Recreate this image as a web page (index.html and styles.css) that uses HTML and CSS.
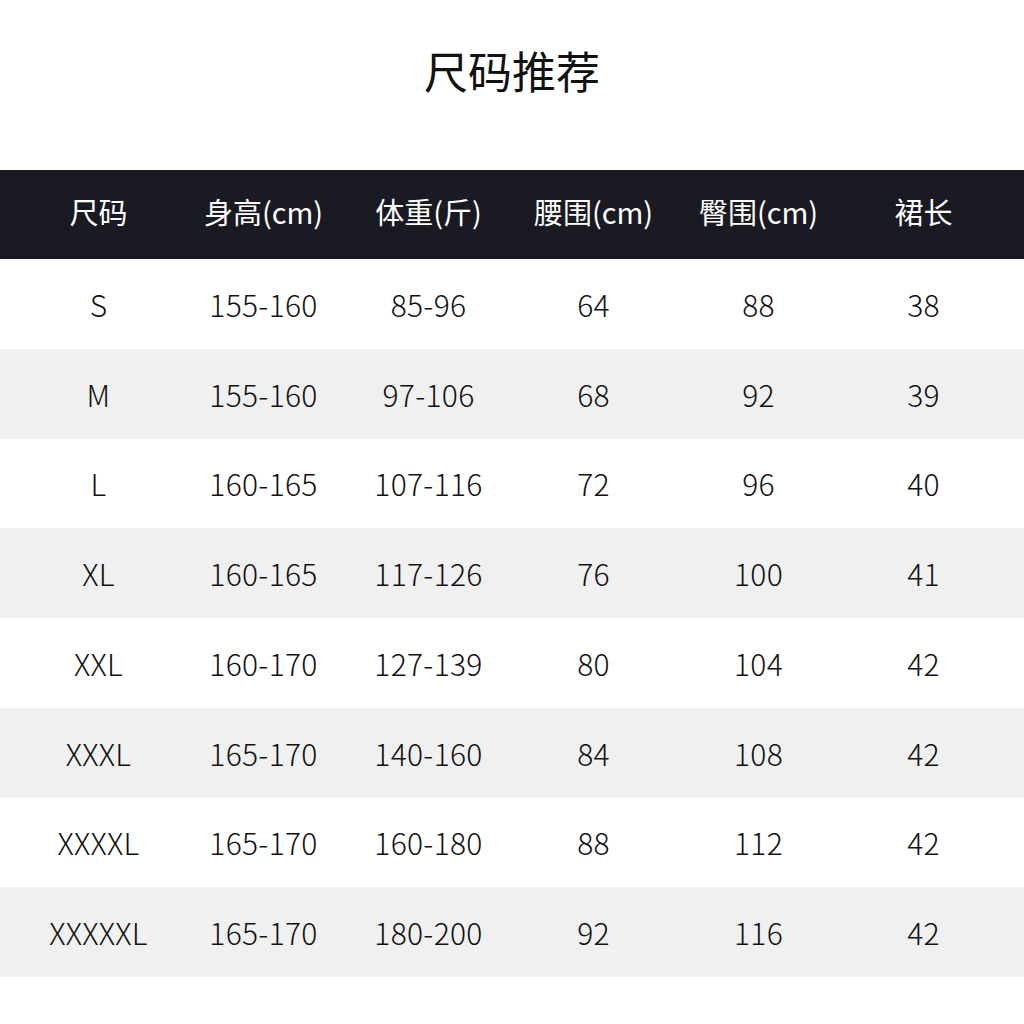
FILE: index.html
```html
<!DOCTYPE html>
<html lang="zh-CN">
<head>
<meta charset="utf-8">
<title>尺码推荐</title>
<link rel="stylesheet" href="styles.css">
</head>
<body>
<div class="page">
  <h1 class="title">尺码推荐</h1>
  <div class="table">
    <div class="row head">
      <div class="cell">尺码</div><div class="cell">身高(cm)</div><div class="cell">体重(斤)</div><div class="cell">腰围(cm)</div><div class="cell">臀围(cm)</div><div class="cell">裙长</div>
    </div>
    <div class="row">
      <div class="cell">S</div><div class="cell">155-160</div><div class="cell">85-96</div><div class="cell">64</div><div class="cell">88</div><div class="cell">38</div>
    </div>
    <div class="row alt">
      <div class="cell">M</div><div class="cell">155-160</div><div class="cell">97-106</div><div class="cell">68</div><div class="cell">92</div><div class="cell">39</div>
    </div>
    <div class="row">
      <div class="cell">L</div><div class="cell">160-165</div><div class="cell">107-116</div><div class="cell">72</div><div class="cell">96</div><div class="cell">40</div>
    </div>
    <div class="row alt">
      <div class="cell">XL</div><div class="cell">160-165</div><div class="cell">117-126</div><div class="cell">76</div><div class="cell">100</div><div class="cell">41</div>
    </div>
    <div class="row">
      <div class="cell">XXL</div><div class="cell">160-170</div><div class="cell">127-139</div><div class="cell">80</div><div class="cell">104</div><div class="cell">42</div>
    </div>
    <div class="row alt">
      <div class="cell">XXXL</div><div class="cell">165-170</div><div class="cell">140-160</div><div class="cell">84</div><div class="cell">108</div><div class="cell">42</div>
    </div>
    <div class="row">
      <div class="cell">XXXXL</div><div class="cell">165-170</div><div class="cell">160-180</div><div class="cell">88</div><div class="cell">112</div><div class="cell">42</div>
    </div>
    <div class="row alt">
      <div class="cell">XXXXXL</div><div class="cell">165-170</div><div class="cell">180-200</div><div class="cell">92</div><div class="cell">116</div><div class="cell">42</div>
    </div>
  </div>
</div>
</body>
</html>
```
FILE: styles.css
```css
html, body {
  margin: 0;
  padding: 0;
  background: #ffffff;
}
body {
  font-family: "Noto Sans CJK SC", "Noto Sans", sans-serif;
  color: #111111;
}
.page {
  width: 1024px;
  height: 1024px;
}
.title {
  margin: 0;
  height: 170px;
  box-sizing: border-box;
  padding-top: 47px;
  line-height: 46px;
  font-size: 44px;
  font-weight: 400;
  text-align: center;
  color: #111111;
}
.table {
  display: flex;
  flex-direction: column;
}
.row {
  display: grid;
  grid-template-columns: repeat(6, 165px);
  padding-left: 16px;
  height: 89.75px;
  align-items: center;
  font-size: 30px;
  font-weight: 300;
  letter-spacing: 0.3px;
}
.row.head {
  height: 89px;
  background: #1a1a22;
  color: #ffffff;
  font-size: 29px;
  font-weight: 400;
  letter-spacing: 0;
}
.row.head .cell {
  padding-bottom: 6px;
}
.row.alt {
  background: #f0f0f0;
}
.cell {
  text-align: center;
  white-space: nowrap;
  line-height: 1;
}
```
